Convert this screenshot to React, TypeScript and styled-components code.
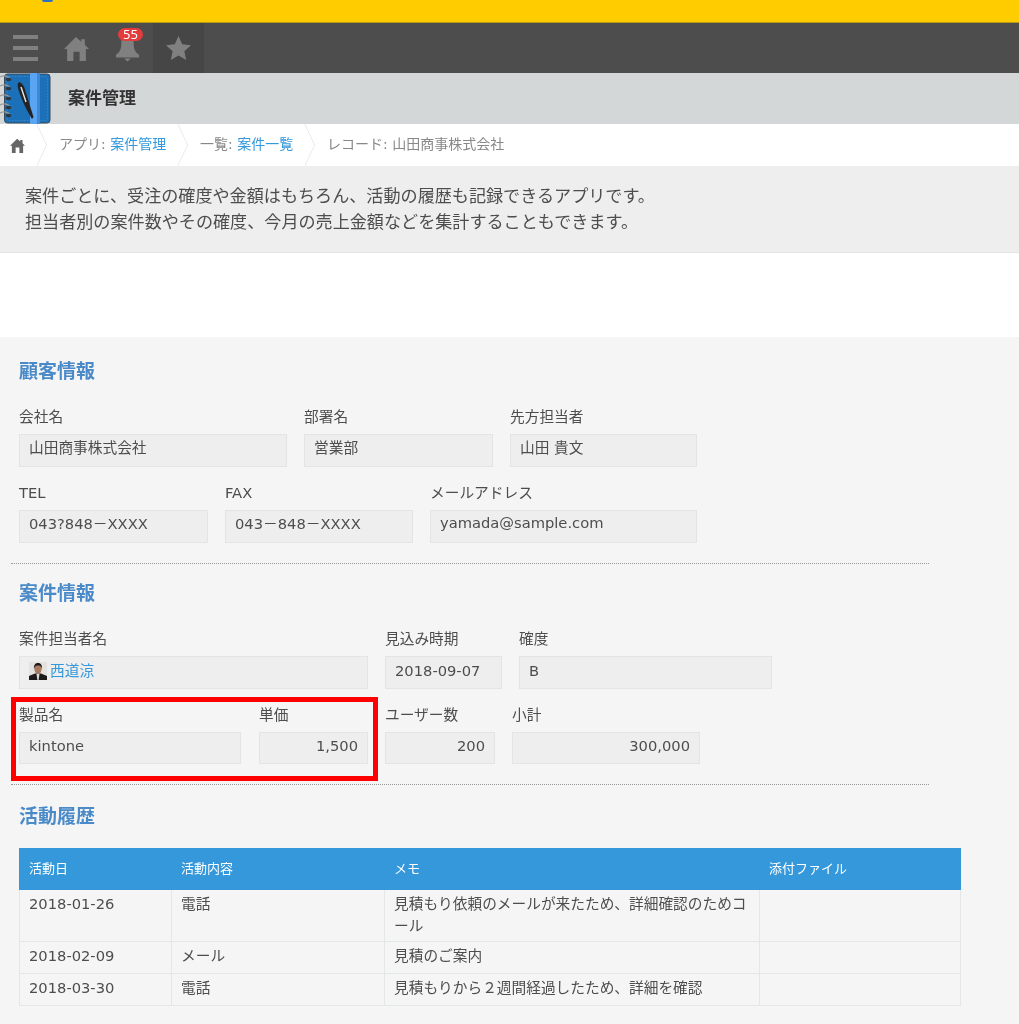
import styled, { createGlobalStyle } from 'styled-components';

const GlobalStyle = createGlobalStyle`
  html, body {
    margin: 0;
    padding: 0;
    background: #fff;
    overflow: hidden;
  }
  body {
    font-family: "DejaVu Sans", "Noto Sans CJK JP", sans-serif;
    color: #4d4d4d;
    font-size: 14.7px;
  }
`;

const customerRows = [
  [
    { label: '会社名', value: '山田商事株式会社', width: 268 },
    { label: '部署名', value: '営業部', width: 189 },
    { label: '先方担当者', value: '山田 貴文', width: 187 },
  ],
  [
    { label: 'TEL', value: '043?848－XXXX', width: 189 },
    { label: 'FAX', value: '043－848－XXXX', width: 188 },
    { label: 'メールアドレス', value: 'yamada@sample.com', width: 267 },
  ],
];

const history = [
  { date: '2018-01-26', kind: '電話', memo: '見積もり依頼のメールが来たため、詳細確認のためコール', tall: true },
  { date: '2018-02-09', kind: 'メール', memo: '見積のご案内' },
  { date: '2018-03-30', kind: '電話', memo: '見積もりから２週間経過したため、詳細を確認' },
];

const HomeIcon = ({ size }: { size: number }) => (
  <svg width={size} height={size} viewBox="0 0 24 24" fill="currentColor">
    <path d="M11.5 1 L16.5 5.5 L16.5 3 L20 3 L20 8.5 L24 12.5 L21 12.5 L21 24 L15 24 L15 15 L9 15 L9 24 L3 24 L3 12.5 L0 12.5 Z" />
  </svg>
);

const Field = ({ label, value, width, right }: { label: string; value: string; width: number; right?: boolean }) => (
  <FieldGroup $width={width}>
    <Label>{label}</Label>
    <Value $right={right}>{value}</Value>
  </FieldGroup>
);

export default function App() {
  return (
    <Page>
      <GlobalStyle />
      <TopBar>
        <LogoHint />
      </TopBar>
      <NavBar>
        <NavCell>
          <svg width="25" height="26" viewBox="0 0 25 26" fill="#808080">
            <rect x="0" y="0" width="25" height="4" />
            <rect x="0" y="11" width="25" height="4" />
            <rect x="0" y="22" width="25" height="4" />
          </svg>
        </NavCell>
        <NavCell>
          <HomeIcon size={25} />
        </NavCell>
        <NavCell>
          <svg width="25" height="28" viewBox="0 0 26 28" fill="currentColor">
            <path d="M13 1 C18 1 19.5 5 19.5 10 C19.5 15 21 18 25 21 L25 24 L1 24 L1 21 C5 18 6.5 15 6.5 10 C6.5 5 8 1 13 1 Z" />
            <path d="M9.5 25 L16.5 25 L13 28 Z" />
          </svg>
          <Badge>55</Badge>
        </NavCell>
        <NavCell $active>
          <svg width="25" height="24" viewBox="0 0 26 25" fill="currentColor">
            <path d="M13 0 L16.8 8.6 L26 9.6 L19.1 15.8 L21 25 L13 20.3 L5 25 L6.9 15.8 L0 9.6 L9.2 8.6 Z" />
          </svg>
        </NavCell>
      </NavBar>
      <AppHeader>
        <svg width="51" height="51" viewBox="0 0 51 51">
          <rect x="4.5" y="1" width="45.5" height="49" rx="3" fill="#1c70b8" stroke="#3a4a5a" strokeWidth="1" />
          <rect x="7" y="3.5" width="40.5" height="44" rx="2" fill="none" stroke="#4b94d4" strokeWidth="0.6" strokeDasharray="1.5 1.5" />
          <rect x="30" y="0" width="10" height="51" rx="1" fill="#5aa5f2" />
          <rect x="37" y="0" width="3" height="51" fill="#3f86d6" />
          <path d="M18 10 C20 8 23 11 24.5 15 L33.5 44 L32 46 C27 38 21 26 18 15 C17.5 13 17.5 11 18 10 Z" fill="#232323" />
          <path d="M21 14 L26 29" stroke="#e6e6e6" strokeWidth="1.4" />
          {[6, 15, 25, 34, 42].map((y) => (
            <g key={y}>
              <path d={`M0 ${y - 2} C4 ${y - 4} 9 ${y - 3} 10 ${y}`} fill="none" stroke="#9a9a9a" strokeWidth="1.3" />
              <ellipse cx="8.5" cy={y + 0.5} rx="2.8" ry="1.8" fill="#2b3640" />
            </g>
          ))}
        </svg>
        <AppTitle>案件管理</AppTitle>
      </AppHeader>
      <Breadcrumb>
        <CrumbHome>
          <HomeIcon size={15} />
        </CrumbHome>
        <Crumb $width={141}>
          アプリ: <CrumbLink>案件管理</CrumbLink>
        </Crumb>
        <Crumb $width={127}>
          一覧: <CrumbLink>案件一覧</CrumbLink>
        </Crumb>
        <Crumb>レコード: 山田商事株式会社</Crumb>
      </Breadcrumb>
      <Description>
        案件ごとに、受注の確度や金額はもちろん、活動の履歴も記録できるアプリです。
        <br />
        担当者別の案件数やその確度、今月の売上金額などを集計することもできます。
      </Description>
      <Spacer />
      <Form>
        <Section>
          <SectionTitle>顧客情報</SectionTitle>
          {customerRows.map((row) => (
            <CustomerRow key={row[0].label}>
              {row.map((f) => (
                <Field key={f.label} {...f} />
              ))}
            </CustomerRow>
          ))}
        </Section>
        <Section>
          <SectionTitle>案件情報</SectionTitle>
          <Row>
            <FieldGroup $width={349}>
              <Label>案件担当者名</Label>
              <Value>
                <Avatar>
                  <svg width="18" height="18" viewBox="0 0 18 18">
                    <rect width="18" height="18" fill="#e4e2de" />
                    <path d="M0 18 L0 14 L6 11.5 L12 11.5 L18 14 L18 18 Z" fill="#1d1b1a" />
                    <path d="M7.5 12 L10.5 12 L9.6 18 L8.4 18 Z" fill="#ddd" />
                    <ellipse cx="9" cy="7" rx="3.6" ry="4.8" fill="#a87a60" />
                    <path d="M5 7 C4.6 2 7 1 9 1 C11 1 13.4 2 13 7 C12 4 11 3.6 9 3.6 C7 3.6 6 4 5 7 Z" fill="#1b1715" />
                  </svg>
                </Avatar>
                <UserLink>西道涼</UserLink>
              </Value>
            </FieldGroup>
            <Field label="見込み時期" value="2018-09-07" width={117} />
            <Field label="確度" value="B" width={253} />
          </Row>
          <ProductRow>
            <Field label="製品名" value="kintone" width={222} />
            <Field label="単価" value="1,500" width={109} right />
            <Field label="ユーザー数" value="200" width={110} right />
            <Field label="小計" value="300,000" width={188} right />
            <Highlight />
          </ProductRow>
        </Section>
        <Section>
          <SectionTitle>活動履歴</SectionTitle>
          <Table>
            <colgroup>
              <col width="153" />
              <col width="213" />
              <col width="375" />
              <col width="201" />
            </colgroup>
            <thead>
              <tr>
                <Th>活動日</Th>
                <Th>活動内容</Th>
                <Th>メモ</Th>
                <Th>添付ファイル</Th>
              </tr>
            </thead>
            <tbody>
              {history.map((h) => (
                <tr key={h.date}>
                  <Td $tall={h.tall}>{h.date}</Td>
                  <Td $tall={h.tall}>{h.kind}</Td>
                  <Td $tall={h.tall}>{h.memo}</Td>
                  <Td $tall={h.tall} />
                </tr>
              ))}
            </tbody>
          </Table>
        </Section>
      </Form>
    </Page>
  );
}

const Page = styled.div`
  filter: blur(0.35px);
`;

const TopBar = styled.div`
  position: relative;
  height: 23px;
  box-sizing: border-box;
  background: #ffcc00;
  border-bottom: 1px solid #b89a10;
`;

const LogoHint = styled.div`
  position: absolute;
  left: 42px;
  top: 0;
  width: 11px;
  height: 2px;
  border-radius: 0 0 5px 5px;
  background: #2a72c0;
`;

const NavBar = styled.div`
  display: flex;
  height: 50px;
  background: #4d4d4d;
  color: #808080;
`;

const NavCell = styled.div<{ $active?: boolean }>`
  position: relative;
  width: 51px;
  display: flex;
  align-items: center;
  justify-content: center;
  background: ${({ $active }) => ($active ? '#464646' : 'transparent')};
`;

const Badge = styled.span`
  position: absolute;
  top: 5px;
  left: 16px;
  width: 25px;
  height: 13px;
  border-radius: 7px;
  background: #e23c3c;
  color: #fff;
  font-family: "Noto Sans", sans-serif;
  font-size: 13px;
  line-height: 13px;
  text-align: center;
`;

const AppHeader = styled.div`
  display: flex;
  align-items: center;
  height: 51px;
  background: #d4d7d7;
`;

const AppTitle = styled.div`
  margin-left: 17px;
  padding-bottom: 4px;
  font-size: 17px;
  font-weight: 700;
  color: #333;
`;

const Breadcrumb = styled.div`
  display: flex;
  align-items: center;
  height: 42px;
  background: #fff;
  color: #888;
  font-size: 14px;
`;

const CrumbHome = styled.div`
  width: 37px;
  padding-left: 10px;
  box-sizing: border-box;
  display: flex;
  color: #666;
`;

const Crumb = styled.div<{ $width?: number }>`
  position: relative;
  height: 100%;
  display: flex;
  align-items: center;
  white-space: pre;
  box-sizing: border-box;
  padding: 0 0 4px 22px;
  width: ${({ $width }) => ($width ? `${$width}px` : 'auto')};

  &::before {
    content: '';
    position: absolute;
    left: -15px;
    top: 6px;
    width: 30px;
    height: 30px;
    transform: scaleX(0.47) rotate(45deg);
    border-top: 1px solid #dfe3e3;
    border-right: 1px solid #dfe3e3;
    box-sizing: border-box;
  }
`;

const CrumbLink = styled.span`
  color: #3498db;
`;

const Description = styled.div`
  height: 87px;
  box-sizing: border-box;
  padding: 18px 25px 0;
  background: #eeeeee;
  border-bottom: 1px solid #e3e5e5;
  font-size: 17.1px;
  line-height: 25.5px;
  color: #4d4d4d;
`;

const Spacer = styled.div`
  height: 84px;
  background: #fff;
`;

const Form = styled.div`
  height: 687px;
  box-sizing: border-box;
  background: #f5f5f5;
  padding: 5px 0 0 11px;
`;

const Section = styled.div`
  width: 918px;
  padding: 17px 0 20px 8px;
  box-sizing: border-box;
  border-bottom: 1px dotted #999;

  &:last-child {
    width: 950px;
    padding-top: 19px;
    border-bottom: 0;
  }
`;

const SectionTitle = styled.h2`
  margin: 0 0 24px;
  font-size: 19px;
  line-height: 24px;
  font-weight: 700;
  color: #4a8ac8;
`;

const Row = styled.div`
  display: flex;
  gap: 17px;

  & + & {
    margin-top: 16px;
  }
`;

const FieldGroup = styled.div<{ $width: number }>`
  width: ${({ $width }) => $width}px;
`;

const Label = styled.div`
  height: 27px;
  line-height: 20px;
  color: #4d4d4d;
`;

const Value = styled.div<{ $right?: boolean }>`
  height: 33px;
  box-sizing: border-box;
  display: flex;
  align-items: center;
  justify-content: ${({ $right }) => ($right ? 'flex-end' : 'flex-start')};
  padding: 0 9px 4px;
  background: #eeeeee;
  border: 1px solid #e3e5e5;
  color: #4d4d4d;
`;

const CustomerRow = styled(Row)`
  ${Value} {
    padding-bottom: 8px;
  }
`;

const ProductRow = styled(Row)`
  position: relative;
  margin-top: 16px;

  ${FieldGroup}:first-child {
    margin-right: 1px;
  }

  ${Value} {
    height: 32px;
    padding-bottom: 6px;
  }
`;

const Highlight = styled.div`
  position: absolute;
  left: -8px;
  top: -8px;
  width: 367px;
  height: 84px;
  box-sizing: border-box;
  border: 5px solid #ff0000;
  pointer-events: none;
`;

const Avatar = styled.span`
  display: flex;
  margin-right: 3px;
`;

const UserLink = styled.span`
  margin-bottom: 3px;
  color: #3498db;
`;

const Table = styled.table`
  table-layout: fixed;
  width: 942px;
  margin-top: -4px;
  border-collapse: separate;
  border-spacing: 0;
`;

const Th = styled.th`
  height: 42px;
  box-sizing: border-box;
  padding: 0 9px 3px;
  background: #3498db;
  color: #fff;
  font-size: 13px;
  font-weight: 400;
  text-align: left;

  &:first-child {
    padding-left: 10px;
  }
`;

const Td = styled.td<{ $tall?: boolean }>`
  height: ${({ $tall }) => ($tall ? '52px' : '32px')};
  box-sizing: border-box;
  padding: 3px 4px 0 9px;
  vertical-align: top;
  border-right: 1px solid #e3e7e8;
  border-bottom: 1px solid #e3e7e8;
  line-height: 22px;
  color: #4d4d4d;

  &:first-child {
    border-left: 1px solid #e3e7e8;
  }
`;
